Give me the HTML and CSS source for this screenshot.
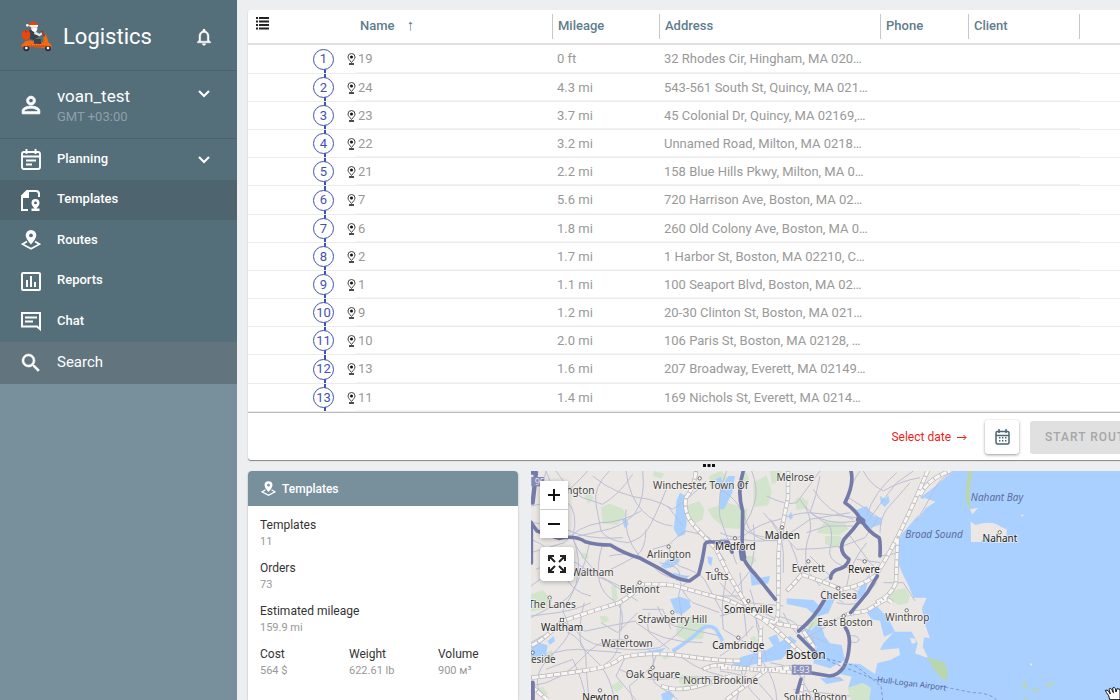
FILE: index.html
```html
<!DOCTYPE html>
<html lang="en">
<head>
<meta charset="utf-8">
<title>Logistics</title>
<link rel="stylesheet" href="styles.css">
</head>
<body>
<div class="app">
  <aside class="sidebar">
    <div class="menu">
      <header class="brand">
        <svg class="brand-logo" viewBox="0 0 96 102" aria-hidden="true">
          <path d="M6 76q4-18 24-18l26 8 14-2 1-20 7-4 8 24q8 8 10 18z" fill="#f4690c"/>
          <path d="M2 71h94v7H4z" fill="#e84a10"/>
          <path d="M6 72l90-1" stroke="#fca03c" stroke-width="2" stroke-dasharray="3 3"/>
          <circle cx="19" cy="82" r="9" fill="#2b3137"/><circle cx="19" cy="81" r="4" fill="#fff"/>
          <circle cx="84" cy="82" r="9" fill="#2b3137"/><circle cx="84" cy="81" r="4" fill="#fff"/>
          <path d="M4 76h24v-4H6zm70 0h22l-4-6H80z" fill="#f4690c"/>
          <path d="M28 26l20 4 8 18-12 6 18 0 2 15-22-1V58L30 54z" fill="#37434d"/>
          <ellipse cx="18" cy="42" rx="13" ry="15" fill="#e8470e"/>
          <path d="M14 26l10 6-8 4z" fill="#c33409"/>
          <path d="M32 14h20v12q-8 7-18 1z" fill="#f4d1c0"/>
          <path d="M38 21q14-2 13 3l-2 8q-10 4-13-5z" fill="#fff"/>
          <path d="M26 10Q36-4 50 6l3 8-26 1z" fill="#ea430b"/>
          <path d="M28 12h26v5H28z" fill="#fff"/><circle cx="22" cy="13" r="4" fill="#fff"/>
          <path d="M44 30l14 8 8-5 3 5-10 8-17-7z" fill="#e4e7e9"/>
          <path d="M66 34l8 12M62 33l8-3" stroke="#b42e12" stroke-width="4"/>
        </svg>
        <h1 class="brand-name">Logistics</h1>
        <button class="icon-button" aria-label="Notifications">
          <svg class="icon-small" viewBox="0 0 24 24"><path stroke="#fff" stroke-width=".5" d="M12 22c1.100 0 2-.9 2-2h-4c0 1.100.9 2 2 2zm6-6v-5c0-3.070-1.630-5.640-4.500-6.320V4c0-.83-.67-1.500-1.500-1.500s-1.500.67-1.500 1.500v.68C7.640 5.360 6 7.920 6 11v5l-2 2v1h16v-1l-2-2zm-2 1H8v-6c0-2.480 1.510-4.500 4-4.500s4 2.020 4 4.500v6z"/></svg>
        </button>
      </header>
      <button class="account">
        <svg class="icon" viewBox="0 0 24 24"><path stroke="#fff" stroke-width=".8" d="M12 5.900a2.100 2.100 0 110 4.200 2.100 2.100 0 010-4.200m0 9c2.970 0 6.100 1.460 6.100 2.100v1.100H5.900V17c0-.64 3.130-2.100 6.100-2.100M12 4a4 4 0 100 8 4 4 0 000-8zm0 9c-2.670 0-8 1.340-8 4v3h16v-3c0-2.660-5.330-4-8-4z" transform="translate(-1.200 -1.200) scale(1.100)"/></svg>
        <span class="account-text"><span class="account-name">voan_test</span><span class="account-zone">GMT +03:00</span></span>
        <svg class="icon-small account-arrow" viewBox="0 0 24 24"><path d="M6 8.500l6 6 6-6" fill="none" stroke="#fff" stroke-width="2.500"/></svg>
      </button>
      <nav class="nav">
        <a class="nav-item" href="#planning">
          <svg class="icon-nav" viewBox="0 0 20 21"><path d="M3 3h14q2 0 2 2v13q0 2-2 2H3q-2 0-2-2V5q0-2 2-2zM1.500 7.500h17M5.500 0v5M14.500 0v5M5 11.500h10M5 15.500h6" fill="none" stroke="#fff" stroke-width="1.900"/></svg>
          <span>Planning</span>
          <svg class="icon-small" viewBox="0 0 24 24"><path d="M6 8.500l6 6 6-6" fill="none" stroke="#fff" stroke-width="2.500"/></svg>
        </a>
        <a class="nav-item nav-current" href="#templates">
          <svg class="icon-nav" viewBox="0 0 20 21"><path d="M7 20H1V6l5-5h9q3 0 3 3v3" fill="none" stroke="#fff" stroke-width="2"/><path d="M1 8V6l5-6h2v8z"/><path fill-rule="evenodd" d="M14.500 9a4 4 0 014 4c0 2-1.300 3.500-3 5.500h3V21h-8v-2.500h3c-1.700-2-3-3.500-3-5.500a4 4 0 014-4zm0 2.500a1.400 1.400 0 100 2.800 1.400 1.400 0 000-2.800z"/></svg>
          <span>Templates</span>
        </a>
        <a class="nav-item" href="#routes">
          <svg class="icon-nav" viewBox="0 0 20 21"><path d="M6 11.500l-4.500 2.700L10 18.800l8.500-4.600-4.500-2.700" fill="none" stroke="#fff" stroke-width="1.700"/><path fill-rule="evenodd" d="M10 0a5.300 5.300 0 015.300 5.300C15.300 9 10 14.500 10 14.500S4.700 9 4.700 5.300A5.300 5.300 0 0110 0zm0 3.500a1.900 1.900 0 100 3.800 1.900 1.900 0 000-3.800z"/></svg>
          <span>Routes</span>
        </a>
        <a class="nav-item" href="#reports">
          <svg class="icon-nav" viewBox="0 0 20 21"><rect x="1" y="2" width="18" height="17" rx="1" fill="none" stroke="#fff" stroke-width="2"/><path d="M5 9h2v7H5zm4-4h2v11H9zm4 6h2v5h-2z"/></svg>
          <span>Reports</span>
        </a>
        <a class="nav-item" href="#chat">
          <svg class="icon-nav" viewBox="0 0 20 21"><path d="M1 2h18v16l-3-2.500H1z" fill="none" stroke="#fff" stroke-width="2"/><path d="M4 5.500h12v2H4zm0 4h8v2H4z"/></svg>
          <span>Chat</span>
        </a>
        <a class="nav-item nav-search" href="#search">
          <svg class="icon" viewBox="0 0 24 24"><path stroke="#fff" stroke-width=".5" d="M15.500 14h-.79l-.28-.27A6.470 6.470 0 0016 9.500 6.500 6.500 0 109.500 16c1.610 0 3.090-.59 4.230-1.570l.27.28v.79l5 4.990L20.490 19l-4.990-5zm-6 0a4.500 4.500 0 110-9 4.500 4.500 0 010 9z"/></svg>
          <span>Search</span>
        </a>
      </nav>
    </div>
  </aside>

  <main class="main">
    <section class="orders">
      <table class="orders-table">
        <colgroup><col class="col-order"><col class="col-name"><col class="col-mileage"><col class="col-address"><col class="col-phone"><col class="col-client"><col></colgroup>
        <thead>
          <tr>
            <th><button class="columns-button" aria-label="Columns"><svg class="icon-list" viewBox="0 0 13 13"><path d="M0 0h2v2H0zm3 0h10v2H3zM0 3.500h2v2H0zm3 0h10v2H3zM0 7h2v2H0zm3 0h10v2H3zM0 10.500h2v2H0zm3 0h10v2H3z"/></svg></button></th>
            <th><div class="head head-name">Name <span class="sort">↑</span></div></th>
            <th><div class="head">Mileage</div></th>
            <th><div class="head">Address</div></th>
            <th><div class="head">Phone</div></th>
            <th><div class="head">Client</div></th>
            <th></th>
          </tr>
        </thead>
        <tbody id="rows"></tbody>
      </table>
      <footer class="orders-footer">
        <span class="date-hint">Select date <svg class="hint-arrow" viewBox="0 0 10 7"><path d="M0 3.500h9M6.500 1L9 3.500 6.500 6"/></svg></span>
        <button class="date-button" aria-label="Select date"><svg class="icon-calendar" viewBox="0 0 15 16"><rect x="1" y="2.500" width="13" height="12.500" rx="1.500" fill="none" stroke="#4d6572" stroke-width="1.500"/><path d="M1 6.500h13M4 0v4M11 0v4" stroke="#4d6572" stroke-width="1.500"/><path d="M4 8.800h7.500M4 11.800h7.500" stroke="#4d6572" stroke-width="1.400" stroke-dasharray="1.400 1.600"/></svg></button>
        <button class="start-button" disabled>START ROUTE</button>
      </footer>
    </section>

    <div class="splitter"><svg class="splitter-dots" viewBox="0 0 12 3"><path d="M0 0h3v3H0zm4.500 0h3v3h-3zM9 0h3v3H9z"/></svg></div>

    <div class="lower">
      <section class="summary">
        <h2 class="summary-title">
          <svg class="icon-title" viewBox="0 0 20 21"><path d="M6 11.500l-4.500 2.700L10 18.800l8.500-4.600-4.500-2.700" fill="none" stroke="#fff" stroke-width="1.700"/><path fill-rule="evenodd" d="M10 0a5.300 5.300 0 015.300 5.300C15.300 9 10 14.500 10 14.500S4.700 9 4.700 5.300A5.300 5.300 0 0110 0zm0 3.500a1.900 1.900 0 100 3.800 1.900 1.900 0 000-3.800z"/></svg>
          Templates
        </h2>
        <dl class="facts">
          <div class="fact fact-wide"><dt>Templates</dt><dd>11</dd></div>
          <div class="fact fact-wide"><dt>Orders</dt><dd>73</dd></div>
          <div class="fact fact-wide"><dt>Estimated mileage</dt><dd>159.9 mi</dd></div>
          <div class="fact"><dt>Cost</dt><dd>564 $</dd></div>
          <div class="fact"><dt>Weight</dt><dd>622.61 lb</dd></div>
          <div class="fact"><dt>Volume</dt><dd>900 м³</dd></div>
        </dl>
      </section>

      <section class="map" aria-label="Map">
        <svg class="map-canvas" viewBox="15 45 1767 687" preserveAspectRatio="xMinYMin slice">
          <rect x="15" y="45" width="1767" height="687" fill="#ebe7e4"/>
          <!-- parks -->
          <g fill="#d2e4cb">
            <path d="M225 155l25-12 40 15 10 20-25 28-45-3zM480 150l40-15 15 25-5 30-25 15-25-10zM545 160l60-20 60 20-10 60-60-5-35-30zM15 415l35-12 30 30-20 25-45 8zM455 500l45-22 40 25-10 45-50 5-30-15zM385 45l30 8-10 15-25-8zM550 60l35-15 20 20-15 30-40-10zM175 120l18-10 10 18-15 15zM255 390l15 0 5 40-15 5zM60 590l18-8 5 22-15 10zM455 655l60 5 10 22-35 15-30-15zM30 700l20-8 15 20-15 20zM165 290l18 2 5 15-20 2zM220 480l22 0 8 14-20 8zM255 690l25-15 12 18-20 16zM405 595l20-10 10 15-20 12z"/>
            <g transform="translate(582 0)"><path d="M100 80l40-22 15 50-10 40-45 5zM0 150l60 0 5 35-30 10-35-5zM150 45h35l-10 30-20 10zM315 195l60 5 10 20-30 18-65-8zM315 240l45 0 10 20-30 15-25-12zM225 130l20-8 20 15-5 20-30 5zM260 495l30-20 5 40-30 5zM500 410l55-15 15 25-5 20-25 8-35-15zM75 300l25 0 10 15-20 12zM90 545l15-5 8 18-15 10zM60 60l20-10 8 20-18 8z"/></g>
          </g>
          <!-- sea, rivers and ponds -->
          <g fill="#aad0ff">
            <path d="M462 110l18 10-6 30 8 50-5 35-20 8-14-25 5-40 4-45zM405 330l20-20 35-8 0 16-20 15-22 5zM440 350l45 10 0 14-35 0zM432 430l30-8 28 10 5 22-28 22-18-5zM288 190l12-5 8 20-12 12zM15 575l25-15 25 8-5 30-45 8zM405 715l25-12 15 15-10 14h-25zM340 590l80-15-15 14-60 10zM130 510l18 8-8 10-14-4zM65 555l18-15 4 16-16 10zM545 300l15 5-4 25-10-10zM570 70l14-8 6 22-12 8z"/>
            <path d="M440 585q50-30 80-60 25-25 50-5l20 35" fill="none" stroke="#aad0ff" stroke-width="11"/>
            <g transform="translate(762 222)">
              <path d="M520-177L490-152 460-127 420-97l30 13L420-52 395-22 365 13 350 48 350 90 368 132 385 165 400 203 440 203 426 235 432 275 450 325 432 322 428 350 445 385 405 370 413 340 395 305 345 305 325 265 290 228 255 240 275 268 300 272 312 320 340 308 310 340 300 360 357 355 360 375 330 390 292 400 285 432 240 402 205 400 180 432 215 440 205 470 220 510H1020V-177z"/>
              <path d="M75 320L60 290 95 300 120 275 135 320 150 340 185 345 195 390 150 415 100 400 110 350zM20 205L100 210 115 225 150 195 165 205 145 250 110 260 80 235 20 222zM120 445L180 440 190 452 140 462zM235 180L270 130 255 190 225 215z"/>
            </g>
            <g transform="translate(582 0)">
              <path d="M30 630l35-28 75-20 50-30 20-12 20 15-45 55-70 12-80 20zM95 390l-5-45 30 20 30-5-5 22-40 5zM400 165l40-15 20 30 25 5 0 20-45 15zM480 120l15 10 10-12 4 20-15 15-12-12zM145 545l25-10 10 25-20 10zM25 60l20 0-8 50-25 50-12 0 0-60zM205 180l8-12 6 16-8 8z"/>
            </g>
          </g>
          <path d="M1142 690l50-20 45 10 20 30-10 22h-100z" fill="none"/>
          <path d="M965 695l45-15 25 15-5 37h-55z" fill="#d2e4cb"/>
          <!-- islands and spits -->
          <g transform="translate(1182 0)">
            <path d="M152 197l15 10q50-15 75 5l18 8 0 30-20 10-45-22-12 20-30 0zM150 160l25-5-18 20zM-30 545l15 3 3 12-12 3zM303 176h8v4h-8zM330 622l6 1v6l-6-2zM0 150l12-25 35 12-30 20-25 35z" fill="#ebe7e4"/>
            <path d="M143 45h14l-8 70 2 55-15-45zM20 602l25 8 30 10 9 30-3 22-16-3-22-28zM308 680l8-5 4 18-9 12zM335 702l25-5-3 7-22 4zM375 688l25-10 2 6-22 10zM312 727l12-3-3 8h-10z" fill="#b9d6ae"/>
          </g>
          <!-- streets -->
          <g fill="none" stroke="#bdbfd4" stroke-width="3" stroke-linejoin="round">
            <path d="M60 45q20 60 60 90t20 110q20 60 90 120l60 30M15 150q60-10 90-30t80-75M90 45q40 60 80 80l60 20q50-30 90-90M250 45q-50 50-40 100l15 80q20 30 80 35 40-10 60-40t60-130M300 45q10 80 50 120t90 45M200 60q70 60 170 70 40 10 70 30 60-40 100-85M350 45q10 80-25 130-40 40-100 50l-90 20M15 290l100-30q40-50 110-60 60 0 120-35M30 340q60-30 120-20 50 40 80 30t100-50q30-20 30-80M15 390q60-50 120-50 80 10 140 55l60 40M140 245q30 70 10 140-20 50-60 60l-75 40M230 265q-20 60-10 110 10 40 45 60t20 90M15 480l80-10q60-10 100-30M190 265q-20 100-80 200 20 40 20 60t-60 80-20 120M110 495q40 30 70 30 90-20 150-30M15 560q60-40 125-50 30 50 90 60 90 20 170 5 60-40 80-70M175 440q-20 70-10 130l60 60q30 40 40 100M225 500l50 30 60-60M120 525q60 30 60 80t10 127M15 620q70-40 140-40l130 10M60 640l80-30q30 60 40 122M230 630q50-30 50-80l5-120M300 600l-30 60 60 72M360 570q30 30 20 60l-70 60 10 42M390 600q-20 50-5 80l70 50M280 640q60 30 110 30l190-10M395 450q10 40 50 60l140 30M370 470q-10 40 0 60l60 50M350 460h60l25 60M430 270q0 40 30 60 60 20 75 40l60 110M400 320q60 10 60 30 0 60 40 90l80 30M490 375q-40 20-30 60l10 70M380 280l50-15q30-30 50-40 50 10 70 20l48 70M425 150l45 60"/>
            <path d="M15 250q60 20 90 90t90 80M15 690q90-10 160-90t180-30M60 45q-25 90 30 150t200 50M330 500q70 60 200 60M250 300q90-20 130 30t110 30M440 580q60 60 150 80M300 160q-10 80 40 140M15 200q60 0 110 45"/>
            <g transform="translate(582 0)">
              <path d="M0 230q40 20 70 10 50-40 110-50 50-20 90-20l140 15M0 250h60q60 10 120 0 50-30 90-60l120-20M20 45q-30 70-20 140l50 140M95 45q20 50 10 90t-30 70 100 45M130 170q60 60 60 120v60M100 205q10 80-10 140l-55 70M240 130q40 50 30 100-20 50-10 110l40 50M140 120q60 30 90 20l70-95M280 100q40 70 120 90M300 60q-10 60-30 110l60 40q10 30 0 70t70 60M420 45q-30 40-35 80 50 30 90 60l-40 60-80 30M440 200q50-70 90-120l50-35M480 230q0-40 20-70l70-80M390 240q30 40 60 80l30 30M430 45q20 40 60 60 50-30 110-40M260 230l60-20h80M210 260q20 40 30 90l60 30 60-40M150 190q50 60 80 90 70 0 130-10M270 300l60 60M440 260q-50 60-60 130l40 20M480 300l60-10M490 380h60l35 55M410 310l70 10M0 380q40 50 80 60l110 10M0 420h60q40 40 60 100M20 360q-20 90-10 160l100 60M60 350l20 190M0 480q60-20 130-10l100 50M90 400q20 60 20 110l30 100M0 600q50-30 100-90M190 470q20 50 60 80l30-50M170 480q60 10 80 50l70 30M0 645q70 10 110 30l50 57M60 630q10 60 60 102M100 600q-40 80-50 132M150 620q70 10 90 40l40 72M220 700l80 10 90 10M270 650l100 22M250 550q60-30 130-80M350 440q40 10 70 0l50-60M310 400l60 40"/>
              <path d="M0 100q60 30 80 100t120 50M255 150q50 70 180 40M0 560q90 0 130 60t40 112M440 180q20-70 90-130M245 550q20-20 35 5t-10 45M385 540q30-5 32 12-5 12-25 5M700 45q-40 20-60 60t-50 90"/>
            </g>
          </g>
          <!-- main roads: casing, fill and tick marks -->
          <defs>
            <path id="r1" d="M15 570q40-20 95-75l90-30 80-25q50-30 60-55 70-3 110 5l90 25 60 15q50 20 90 50l70 25 65 10 40 60M15 665q90-10 150-20 90-10 120-40 90-20 190-5t170 15M510 45q-5 50-30 80-10 50 30 90l60 65 40 80 60 100 80 60 85 80M530 640q40-20 80-8l90 10 100-5M15 690l50 42M405 690q50 20 130-5l80-25"/>
            <path id="r2" d="M786 45l0 80-18 90q-14 60-10 120l-2 140-8 30M782 405q30-30 45-50l70 25 50 20q60-10 100-40 50-70 130-250l30-70M1182 120q20-50 90-75M960 475l60-10 50-30q15-10 28 5M1050 440q45-20 60-60l5-140M830 640l-5 90M600 732l120-90 90-10M700 630l5-120M582 635l120 5 110 10"/>
          </defs>
          <g fill="none">
            <g stroke="#b9b7b8" stroke-width="13"><use href="#r1"/><use href="#r2"/></g>
            <g stroke="#f7f6f5" stroke-width="9"><use href="#r1"/><use href="#r2"/></g>
            <g stroke="#b9b7b8" stroke-width="9" stroke-dasharray="3 19"><use href="#r1"/><use href="#r2"/></g>
          </g>
          <!-- motorways -->
          <g fill="none" stroke="#757ba8" stroke-linejoin="round" stroke-linecap="round">
            <path stroke-width="11" d="M15 200l18 25 65 22q50-10 80 10 35 10 75 10 40 25 90 40 50 25 100 55 30 12 47 13 15-10 28-20l10-40q5-25 8-45 0-15 20-12h50l12 30M652 45q-20 60-2 120l-2 130q10 30 40 60l60 75"/>
            <path stroke-width="11" d="M975 45q10 40-18 95 30 20 47 50-20 30-50 60-20 35 15 60-5 25-40 32-15 10-15 25M1004 190q25 40 55 55 5 10 3 55M1054 360l-30 50-50 60M895 432q-30 55-77 93M818 540l50 50-5 15M958 515q14 20 12 50-5 90-60 95l-70-12M825 670l-12 40"/>
            <path stroke-width="20" d="M648 285l3 20M1000 190l8 5"/>
            <path stroke-width="13" d="M15 200v120M15 50l15 0-10 90M20 680v52"/>
          </g>
          <rect x="16" y="63" width="38" height="28" fill="#8388b4"/><text x="26" y="88" class="shield">95</text>
          <rect x="797" y="626" width="60" height="30" rx="4" fill="#8b90b9"/>
          <text x="802" y="650" class="shield">I-93</text>
          <g fill="none" stroke="#8298d0" stroke-width="3" stroke-dasharray="10 7"><path d="M860 585l60 35 125 50 20 5M870 600l120 30 75 60 5 42M1240 690l100 20q60 0 80 32"/></g>
          <g class="places" text-anchor="middle" transform="translate(0 3)">
            <g fill="#fff" stroke="#555" stroke-width="2.500"><circle cx="521" cy="64" r="5"/><circle cx="428" cy="269" r="5"/><circle cx="341" cy="377" r="5"/><circle cx="71" cy="422" r="5"/><rect x="103" y="484" width="10" height="10"/><circle cx="439" cy="466" r="5"/><circle cx="301" cy="540" r="5"/><circle cx="380" cy="632" r="5"/><circle cx="222" cy="700" r="5"/><circle cx="20" cy="587" r="5"/><circle cx="627" cy="244" r="5"/><circle cx="572" cy="339" r="5"/><circle cx="667" cy="432" r="5"/><circle cx="637" cy="542" r="5"/><circle cx="768" cy="211" r="5"/><circle cx="847" cy="313" r="5"/><circle cx="1016" cy="313" r="5"/><circle cx="937" cy="394" r="5"/><circle cx="953" cy="477" r="5"/><circle cx="1142" cy="460" r="5"/><circle cx="1421" cy="226" r="5"/><circle cx="867" cy="702" r="5"/></g>
            <text x="524" y="97">Winchester, Town Of</text><text x="163" y="112">ngton</text>
            <text x="429" y="302">Arlington</text><text x="200" y="357">Waltham</text><text x="341" y="407">Belmont</text>
            <text x="78" y="452">The Lanes</text><text x="108" y="522" class="strong">Waltham</text><text x="439" y="499">Strawberry Hill</text>
            <text x="303" y="570">Watertown</text><text x="52" y="619">eside</text><text x="381" y="664">Oak Square</text>
            <text x="224" y="731" class="strong">Newton</text><text x="584" y="680">North Brookline</text><text x="637" y="577" class="strong">Cambridge</text>
            <text x="628" y="279" class="strong">Medford</text><text x="573" y="370">Tufts</text><text x="668" y="468" class="strong">Somerville</text>
            <text x="808" y="73">Melrose</text><text x="769" y="245" class="strong">Malden</text><text x="847" y="345">Everett</text>
            <text x="1014" y="347" class="strong">Revere</text><text x="938" y="425">Chelsea</text><text x="957" y="507">East Boston</text>
            <text x="1144" y="493">Winthrop</text><text x="839" y="606" class="city">Boston</text><text x="868" y="731">South Boston</text>
            <text x="1422" y="256" class="strong">Nahant</text><text x="1413" y="132" class="sea">Nahant Bay</text><text x="1224" y="242" class="sea">Broad Sound</text>
            <text x="1156" y="688" class="ferry" transform="rotate(7 1156 688)">Hull-Logan Airport</text>
          </g>
          <path d="M1751 731l-3-12q-8-10-10-16 5-3 10 3l5 8-4-14q3-6 8 0l5 10-2-14q5-5 8 2l2 10 3-10 9 2v31z" fill="#fff" stroke="#111" stroke-width="3"/>
        </svg>
        <div class="map-controls">
          <div class="zoom">
            <button class="zoom-button" aria-label="Zoom in"><svg class="icon-zoom" viewBox="0 0 12 12"><path d="M0 6h12M6 0v12"/></svg></button>
            <button class="zoom-button" aria-label="Zoom out"><svg class="icon-zoom" viewBox="0 0 12 12"><path d="M0 6h12"/></svg></button>
          </div>
          <button class="fit-button" aria-label="Full screen"><svg class="icon-fit" viewBox="0 0 18 18"><path d="M1 6V1h5M12 1h5v5M17 12v5h-5M6 17H1v-5M1 1l6 6M17 1l-6 6M17 17l-6-6M1 17l6-6"/></svg></button>
        </div>
      </section>
    </div>
  </main>
</div>
<script src="app.js"></script>
</body>
</html>
```

FILE: styles.css
```css
* { box-sizing: border-box; }
body { margin: 0; font-family: Roboto, "Liberation Sans", sans-serif; font-size: 13px; background: #edeef0; }
button { font: inherit; color: inherit; border: 0; padding: 0; background: none; cursor: pointer; }
svg { display: block; flex: none; }

.app { display: flex; height: 100vh; overflow: hidden; }

.sidebar { flex: none; width: 237px; background: #78909c; color: #fff; fill: #fff; }
.menu { background: #546e7a; }
.brand { display: flex; align-items: center; height: 71px; padding: 3px 23px 0 20px; border-bottom: 1px solid #4a626d; }
.brand-logo { width: 32px; height: 34px; margin-top: 3px; }
.brand-name { margin: 0 auto 0 11px; font-size: 22px; font-weight: 400; }
.icon-small { width: 20px; height: 20px; }
.icon { width: 24px; height: 24px; }
.account { display: flex; align-items: center; width: 100%; height: 68px; padding: 0 23px 0 19px; border-bottom: 1px solid #4a626d; text-align: left; }
.account-text { display: flex; flex-direction: column; margin: 3px auto 0 14px; }
.account-name { font-size: 17px; line-height: 22px; }
.account-zone { font-size: 13px; line-height: 20px; color: #90a0a9; }
.account-arrow { margin-bottom: 22px; }
.nav-item { display: flex; align-items: center; height: 40px; padding: 0 23px 0 21px; color: #fff; font-weight: 500; text-decoration: none; line-height: 16px; }
.nav-item:nth-child(odd) { height: 41px; }
.nav-item span { margin: 0 auto 2px 16px; }
.icon-nav { width: 20px; height: 21px; }
.nav-current { background: #4e646e; }
.nav-search { height: 42px; padding-left: 19px; background: #62757f; font-size: 15px; font-weight: 400; }
.nav-item.nav-search span { margin: 0 0 2px 14px; }

.main { display: flex; flex: 1; flex-direction: column; min-width: 0; padding: 10px 0 0 11px; overflow: hidden; }
.orders { flex: none; margin-right: -32px; background: #fff; border-radius: 3px; box-shadow: 0 1px 1px rgba(0, 0, 0, .45); }
.orders-table { width: 100%; table-layout: fixed; border-collapse: separate; border-spacing: 0; text-align: left; }
.col-order { width: 108px; }
.col-name { width: 197px; }
.col-mileage { width: 107px; }
.col-address { width: 221px; }
.col-phone { width: 88px; }
.col-client { width: 111px; }
th { height: 35px; padding: 0; border-bottom: 2px solid #e0e0e0; color: #607d8b; font-weight: 500; }
.head { height: 25px; padding-left: 5px; border-right: 1px solid #c8c8c8; line-height: 23px; }
.head-name { padding-left: 4px; }
.sort { display: inline-block; padding-left: 9px; font-size: 15px; }
.columns-button { display: block; margin: 0 0 7px 8px; }
.icon-list { width: 13px; height: 13px; fill: #222; }
td { height: 28px; padding: 0 0 0 4px; border-bottom: 1px solid #ececec; color: #999; line-height: 16px; white-space: nowrap; }
tbody tr:first-child td, tbody tr:nth-child(6n) td { height: 29px; }
td.name, td.mileage, td.address, td.phone, td.client { box-shadow: inset 0 -1px #f3f3f3; }
td.name { padding-left: 2px; }
td.order { padding: 0 0 0 65px; background: linear-gradient(#3f51b5, #3f51b5) 76px 0 / 2px 100% no-repeat; background-clip: padding-box; }
tbody tr:first-child td.order { background-position: 76px 100%; background-size: 2px 50%; }
.stop { display: flex; align-items: center; gap: 13px; }
.stop-number { display: flex; align-items: center; justify-content: center; width: 21px; height: 21px; border: 1px solid #3f51b5; border-radius: 50%; background: #fff; color: #3f51b5; }
.pin { width: 9px; height: 12px; }

.orders-footer { display: flex; align-items: center; justify-content: flex-end; height: 48px; padding-top: 1px; border-top: 1px solid #bbb; }
.date-hint { display: flex; align-items: center; gap: 6px; margin-right: 18px; color: #f01c1c; font-size: 12px; }
.hint-arrow { width: 10px; height: 7px; fill: none; stroke: #f01c1c; }
.date-button { display: flex; align-items: center; justify-content: center; width: 34px; height: 34px; margin-right: 11px; border-radius: 3px; box-shadow: 0 1px 3px rgba(0, 0, 0, .4); }
.icon-calendar { width: 15px; height: 16px; }
.start-button { width: 122px; height: 33px; padding-left: 15px; border-radius: 3px; background: #e0e0e0; color: #a6a6a6; font-size: 12px; font-weight: 500; letter-spacing: 1px; text-align: left; white-space: nowrap; }

.splitter { display: flex; flex: none; align-items: center; justify-content: center; height: 11px; padding-left: 49px; }
.splitter-dots { width: 12px; height: 3px; fill: #111; }

.lower { display: flex; flex: 1; gap: 13px; min-height: 0; }
.summary { flex: none; width: 270px; background: #fff; border-radius: 4px 4px 0 0; box-shadow: 0 1px 2px rgba(0, 0, 0, .3); }
.summary-title { display: flex; align-items: center; gap: 6px; height: 35px; margin: 0; padding-left: 13px; border-radius: 4px 4px 0 0; background: #78909c; color: #fff; fill: #fff; font-size: 12px; font-weight: 500; }
.icon-title { width: 15px; height: 16px; }
.facts { display: grid; grid-template-columns: repeat(2, 89px) 1fr; gap: 11px 0; margin: 0; padding: 11px 0 0 12px; }
.fact-wide { grid-column: 1 / -1; }
.fact dt { color: #333; font-size: 12px; line-height: 17px; }
.fact dd { margin: 0; color: #999; font-size: 11px; line-height: 15px; }

.map { position: relative; flex: 1; min-width: 0; overflow: hidden; background: #aad0ff; }
.map-canvas { width: 100%; height: 100%; }
.map text { fill: #444; stroke: #f5f3f1; stroke-width: 5px; stroke-opacity: .8; paint-order: stroke; font-family: "Noto Sans", sans-serif; font-size: 30px; }
.map text.strong { fill: #222; }
.map text.city { fill: #222; font-size: 36px; }
.map text.sea { fill: #5c6ca0; stroke: none; font-style: italic; }
.map text.ferry { fill: #4d5c96; stroke: none; font-size: 24px; }
.map text.shield { fill: #e8e9f5; stroke: none; font-size: 27px; }
.map-controls { position: absolute; top: 10px; left: 9px; display: flex; flex-direction: column; align-items: flex-start; gap: 9px; }
.zoom { border-radius: 3px; box-shadow: 0 1px 5px rgba(0, 0, 0, .3); }
.zoom-button { display: flex; align-items: center; justify-content: center; width: 28px; height: 28px; background: #fff; }
.zoom-button + .zoom-button { height: 29px; border-top: 1px solid #ccc; }
.icon-zoom { width: 12px; height: 12px; stroke: #111; stroke-width: 2px; }
.fit-button { display: flex; align-items: center; justify-content: center; width: 34px; height: 34px; border-radius: 4px; background: #fff; box-shadow: 0 1px 5px rgba(0, 0, 0, .3); }
.icon-fit { width: 18px; height: 18px; fill: none; stroke: #222; stroke-width: 2px; }
```

FILE: app.js
```js
const orders = [
  ["19", "0 ft", "32 Rhodes Cir, Hingham, MA 020…"],
  ["24", "4.3 mi", "543-561 South St, Quincy, MA 021…"],
  ["23", "3.7 mi", "45 Colonial Dr, Quincy, MA 02169,…"],
  ["22", "3.2 mi", "Unnamed Road, Milton, MA 0218…"],
  ["21", "2.2 mi", "158 Blue Hills Pkwy, Milton, MA 0…"],
  ["7", "5.6 mi", "720 Harrison Ave, Boston, MA 02…"],
  ["6", "1.8 mi", "260 Old Colony Ave, Boston, MA 0…"],
  ["2", "1.7 mi", "1 Harbor St, Boston, MA 02210, C…"],
  ["1", "1.1 mi", "100 Seaport Blvd, Boston, MA 02…"],
  ["9", "1.2 mi", "20-30 Clinton St, Boston, MA 021…"],
  ["10", "2.0 mi", "106 Paris St, Boston, MA 02128, …"],
  ["13", "1.6 mi", "207 Broadway, Everett, MA 02149…"],
  ["11", "1.4 mi", "169 Nichols St, Everett, MA 0214…"]
];

const pin = '<svg class="pin" viewBox="0 0 9 12"><path d="M4.500 9.500C2.500 7 1 5.800 1 4a3.500 3.500 0 017 0c0 1.800-1.500 3-3.500 5.500z" fill="none" stroke="#444"/><circle cx="4.500" cy="4" r="1.500" fill="#111"/><path d="M2 11h5" stroke="#111" stroke-width="1.500"/></svg>';

document.getElementById("rows").innerHTML = orders.map(([name, mileage, address], i) => `
  <tr>
    <td class="order"><div class="stop"><span class="stop-number">${i + 1}</span>${pin}</div></td>
    <td class="name">${name}</td>
    <td class="mileage">${mileage}</td>
    <td class="address">${address}</td>
    <td class="phone"></td>
    <td class="client"></td>
    <td></td>
  </tr>`).join("");
```
